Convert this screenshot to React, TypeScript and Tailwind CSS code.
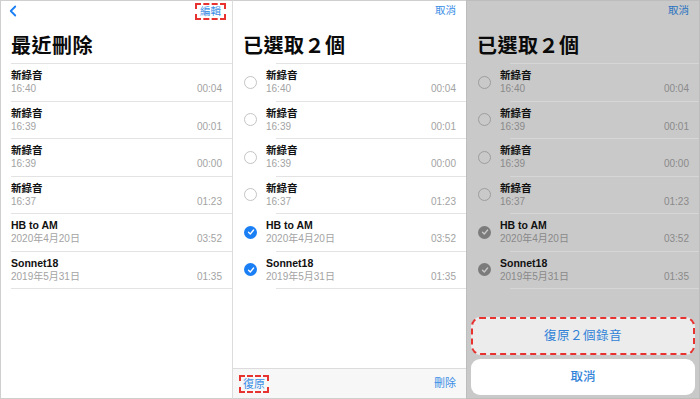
import { ChevronLeft } from "lucide-react"

type Row = { name: string; sub: string; len: string; checked?: boolean }

const ROWS: Row[] = [
  { name: "新錄音", sub: "16:40", len: "00:04" },
  { name: "新錄音", sub: "16:39", len: "00:01" },
  { name: "新錄音", sub: "16:39", len: "00:00" },
  { name: "新錄音", sub: "16:37", len: "01:23" },
  { name: "HB to AM", sub: "2020年4月20日", len: "03:52", checked: true },
  { name: "Sonnet18", sub: "2019年5月31日", len: "01:35", checked: true },
]

const FONT = { fontFamily: '"Liberation Sans", "Noto Sans CJK TC", sans-serif' }

function Check({ on, dim }: { on?: boolean; dim?: boolean }) {
  if (!on)
    return <div className={`w-[13px] h-[13px] rounded-full border ${dim ? "border-[#9d9d9d]" : "border-[#c4c4c4]"}`} />
  return (
    <div className={`w-[13px] h-[13px] rounded-full flex items-center justify-center ${dim ? "bg-[#7b7b7b]" : "bg-[#1a7ff5]"}`}>
      <svg width="8" height="8" viewBox="0 0 8 8" fill="none">
        <path d="M1.5 4.2 L3.3 6 L6.6 2" stroke={dim ? "#c9c9c9" : "#fff"} strokeWidth="1.3" strokeLinecap="round" strokeLinejoin="round" />
      </svg>
    </div>
  )
}

function List({ select, dim }: { select?: boolean; dim?: boolean }) {
  const line = dim ? "bg-[#d6d6d6]" : "bg-[#e3e3e3]"
  const sub = dim ? "text-[#8a8a8a]" : "text-[#a3a3a3]"
  return (
    <div>
      {ROWS.map((r, i) => (
        <div key={i} className="h-[37.5px] flex flex-col">
          <div className={`h-px ${line} ${select ? "ml-[43px]" : "ml-[10px]"}`} />
          <div className="flex flex-1">
            {select && (
              <div className="w-[33px] flex items-center justify-center pl-[2px]">
                <Check on={r.checked} dim={dim} />
              </div>
            )}
            <div className={`flex-1 pt-[4px] pr-[10px] ${select ? "" : "pl-[10px]"}`}>
              <div className="text-[10.5px] leading-[14px] text-[#111] font-semibold">{r.name}</div>
              <div className={`flex justify-between text-[10px] leading-[14px] ${sub}`}>
                <span>{r.sub}</span>
                <span>{r.len}</span>
              </div>
            </div>
          </div>
        </div>
      ))}
      <div className={`h-px ${line} ${select ? "ml-[43px]" : "ml-[10px]"}`} />
    </div>
  )
}

function Title({ text }: { text: string }) {
  return (
    <div className="h-[42px] flex items-center pt-[8px] pl-[10px] text-[20px] font-bold text-[#0a0a0a] tracking-[0.5px]">
      {text}
    </div>
  )
}

export default function App() {
  return (
    <div className="flex w-[700px] h-[399px] bg-white" style={FONT}>
      {/* Panel 1 */}
      <div className="w-[233px] h-full flex flex-col border border-[#cfcfcf] border-r-[#dcdcdc]">
        <div className="h-[20px] flex items-center justify-between pl-[3px] pr-[6px]">
          <ChevronLeft size={18} strokeWidth={2.4} className="text-[#1a7ff5]" />
          <span className="px-[3px] border-2 border-dashed border-[#e8322f] text-[10.5px] leading-[13px] text-[#3a8ee6]">編輯</span>
        </div>
        <Title text="最近刪除" />
        <List />
      </div>

      {/* Panel 2 */}
      <div className="w-[233px] h-full flex flex-col border-y border-[#cfcfcf]">
        <div className="h-[20px] flex items-center justify-end pr-[10px] text-[10.5px] text-[#3a8ee6]">取消</div>
        <Title text="已選取２個" />
        <List select />
        <div className="flex-1" />
        <div className="h-[30px] border-t border-[#dcdcdc] bg-[#f7f7f7] flex items-center justify-between pl-[6px] pr-[10px] text-[11px] text-[#3a8ee6]">
          <span className="px-[2px] border-2 border-dashed border-[#e8322f] leading-[14px]">復原</span>
          <span>刪除</span>
        </div>
      </div>

      {/* Panel 3 */}
      <div className="w-[234px] h-full flex flex-col border border-[#bdbdbd] bg-[#c9c9c9]">
        <div className="h-[20px] flex items-center justify-end pr-[10px] text-[10.5px] text-[#2a72c0]">取消</div>
        <Title text="已選取２個" />
        <List select dim />
        <div className="flex-1" />
        <div className="px-[4px] pb-[3px] flex flex-col gap-[4px]">
          <div className="h-[38px] rounded-[9px] bg-[#ececec] border-2 border-dashed border-[#e8322f] flex items-center justify-center text-[12.5px] text-[#2f82d8] tracking-[0.5px]">
            復原２個錄音
          </div>
          <div className="h-[36px] rounded-[9px] bg-white flex items-center justify-center text-[12.5px] text-[#2f82d8] font-medium">
            取消
          </div>
        </div>
      </div>
    </div>
  )
}
